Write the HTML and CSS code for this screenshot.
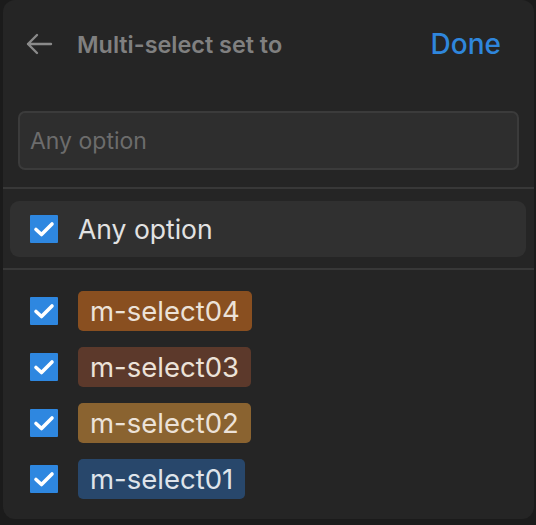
FILE: index.html
```html
<!DOCTYPE html>
<html lang="en">
<head>
    <meta charset="UTF-8">
    <meta name="viewport" content="width=device-width, initial-scale=1.0">
    <title>Multi-select filter</title>
    <link rel="stylesheet" href="styles.css">
</head>
<body>
    <div class="panel">
        <div class="header">
            <svg class="back" width="28" height="22" viewBox="0 0 28 22">
                <path d="M26 11H3M12 2L3 11l9 9" fill="none" stroke="#8a8a8a" stroke-width="2.4" stroke-linecap="round" stroke-linejoin="round"/>
            </svg>
            <span class="title">Multi-select set to</span>
            <span class="done">Done</span>
        </div>

        <div class="search">
            <input type="text" placeholder="Any option">
        </div>

        <div class="divider"></div>

        <div class="any-row">
            <span class="check">
                <svg width="28" height="28" viewBox="0 0 28 28"><path d="M6 14.5l5.5 5L22 9" fill="none" stroke="#fff" stroke-width="3.6" stroke-linecap="round" stroke-linejoin="round"/></svg>
            </span>
            <span class="any-label">Any option</span>
        </div>

        <div class="divider"></div>

        <div class="options">
            <div class="option">
                <span class="check">
                    <svg width="28" height="28" viewBox="0 0 28 28"><path d="M6 14.5l5.5 5L22 9" fill="none" stroke="#fff" stroke-width="3.6" stroke-linecap="round" stroke-linejoin="round"/></svg>
                </span>
                <span class="tag tag-orange">m-select04</span>
            </div>
            <div class="option">
                <span class="check">
                    <svg width="28" height="28" viewBox="0 0 28 28"><path d="M6 14.5l5.5 5L22 9" fill="none" stroke="#fff" stroke-width="3.6" stroke-linecap="round" stroke-linejoin="round"/></svg>
                </span>
                <span class="tag tag-brown">m-select03</span>
            </div>
            <div class="option">
                <span class="check">
                    <svg width="28" height="28" viewBox="0 0 28 28"><path d="M6 14.5l5.5 5L22 9" fill="none" stroke="#fff" stroke-width="3.6" stroke-linecap="round" stroke-linejoin="round"/></svg>
                </span>
                <span class="tag tag-gold">m-select02</span>
            </div>
            <div class="option">
                <span class="check">
                    <svg width="28" height="28" viewBox="0 0 28 28"><path d="M6 14.5l5.5 5L22 9" fill="none" stroke="#fff" stroke-width="3.6" stroke-linecap="round" stroke-linejoin="round"/></svg>
                </span>
                <span class="tag tag-blue">m-select01</span>
            </div>
        </div>
    </div>
</body>
</html>
```

FILE: styles.css
```css
body {
    margin: 0;
    background-color: #1b1b1b;
    font-family: Inter, "Noto Sans", sans-serif;
    overflow: hidden;
}

.panel {
    margin-left: 3px;
    width: 531px;
    height: 519px;
    background-color: #252525;
    border-radius: 12px;
    box-sizing: border-box;
}

.header {
    display: flex;
    align-items: center;
    height: 88px;
    padding: 0 33px 0 22px;
}

.back {
    margin-right: 24px;
}

.title {
    flex: 1;
    color: #808080;
    font-size: 23.4px;
    font-weight: 600;
}

.done {
    color: #2f86dc;
    font-size: 28px;
    font-weight: 500;
}

.search {
    padding: 23px 15px 0 15px;
}

.search input {
    display: block;
    width: 100%;
    height: 59px;
    box-sizing: border-box;
    background-color: #2e2e2e;
    border: 2px solid #3b3b3b;
    border-radius: 7px;
    padding: 0 10px;
    font-family: inherit;
    font-size: 23px;
    color: #ddd;
    outline: none;
}

.search input::placeholder {
    color: #6c6c6c;
}

.divider {
    height: 2px;
    background-color: #383838;
}

.search + .divider {
    margin-top: 17px;
}

.any-row {
    display: flex;
    align-items: center;
    height: 56px;
    margin: 12px 8px 11px 7px;
    padding-left: 20px;
    background-color: #303030;
    border-radius: 9px;
}

.check {
    display: flex;
    width: 28px;
    height: 28px;
    background-color: #2e87e0;
    border-radius: 1px;
    margin-right: 20px;
    flex-shrink: 0;
}

.any-label {
    color: #e2e2e2;
    font-size: 26.5px;
}

.options {
    padding: 21px 0 0 27px;
}

.option {
    display: flex;
    align-items: center;
    height: 40px;
    margin-bottom: 16px;
}

.tag {
    display: flex;
    align-items: center;
    height: 40px;
    padding: 0 12px;
    border-radius: 5px;
    color: #ece2d8;
    font-size: 27.5px;
}

.tag-orange {
    background-color: #894f20;
}

.tag-brown {
    background-color: #5c392b;
}

.tag-gold {
    background-color: #8a6330;
}

.tag-blue {
    background-color: #28476b;
    color: #dfe4ea;
}
```
